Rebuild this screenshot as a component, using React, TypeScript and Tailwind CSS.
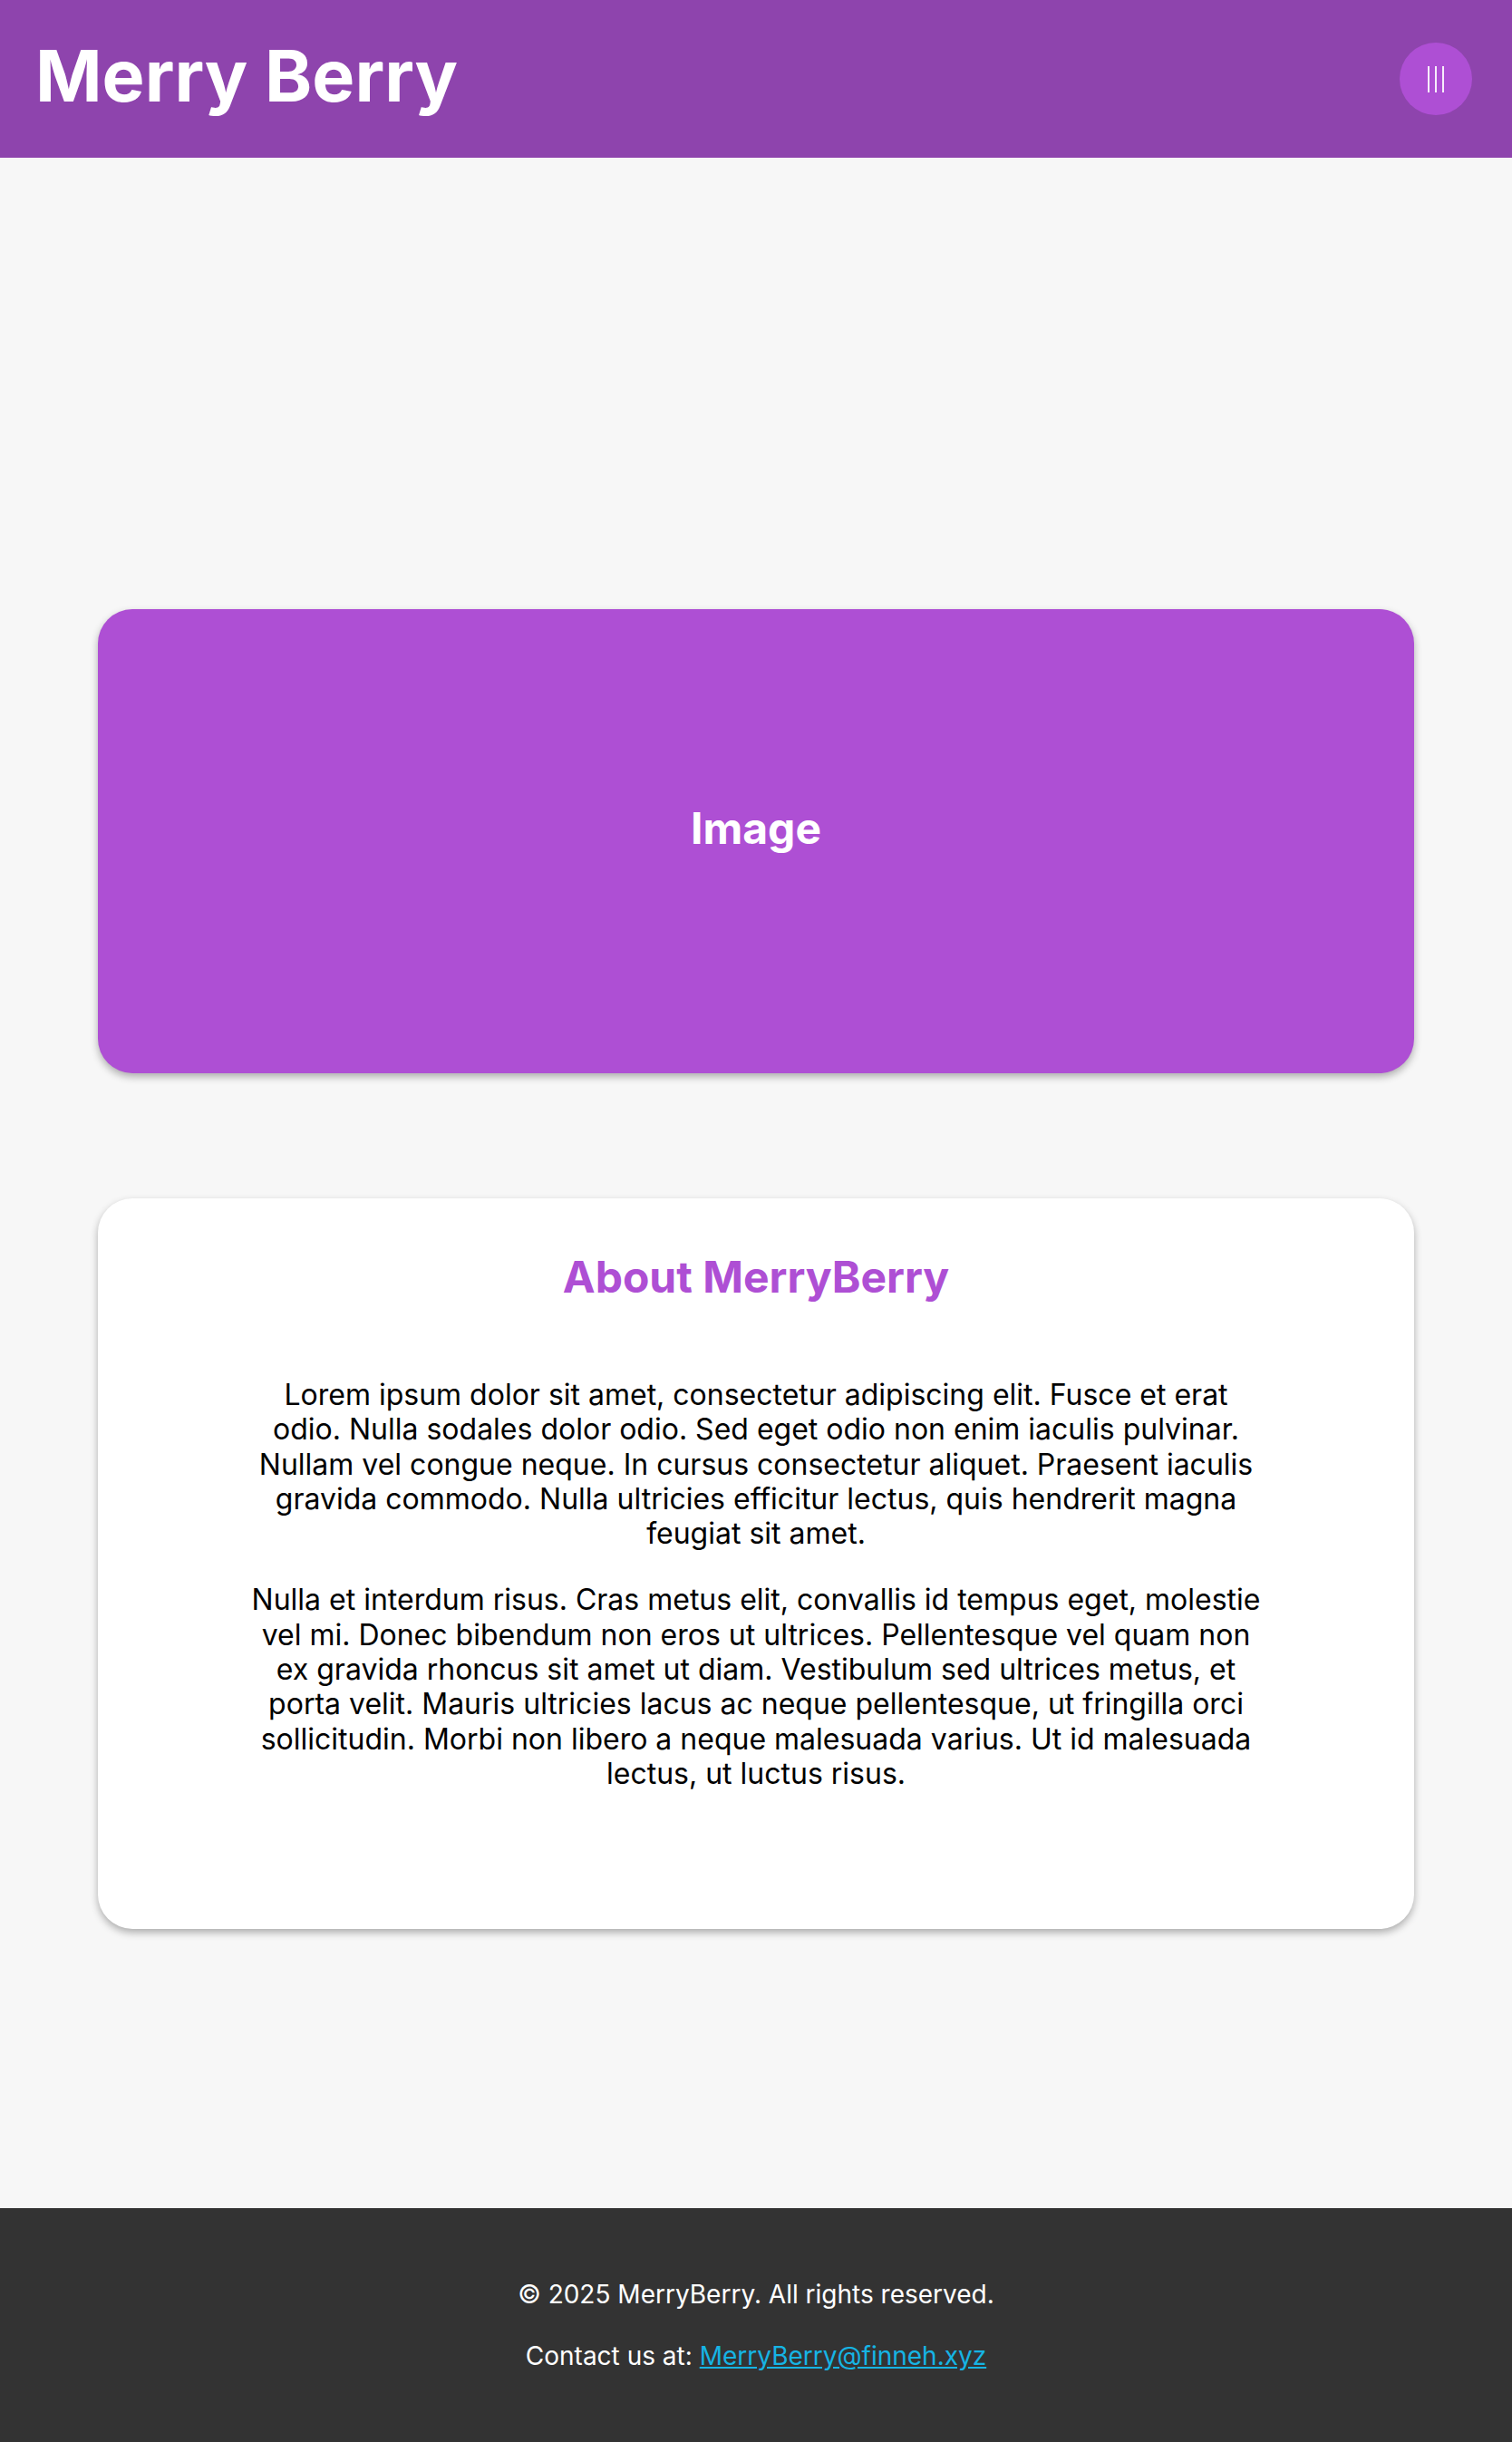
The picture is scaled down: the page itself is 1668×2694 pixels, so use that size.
import React from 'react';

export default function App() {
  return (
    <div className="min-h-screen flex flex-col bg-[#f7f7f7] font-['Inter','Noto_Sans',sans-serif]">
      {/* Header */}
      <header className="h-[174px] flex items-center justify-between bg-[#8e44ad] pl-[39px] pr-[44px]">
        <h1 className="text-[79px] font-bold text-white leading-[96px] -mt-[8px]">Merry Berry</h1>
        <button className="w-[80px] h-[80px] rounded-full bg-[#ae4fd4] flex items-center justify-center gap-[6px]">
          <span className="block w-[2px] h-[29px] bg-white/90"></span>
          <span className="block w-[2px] h-[29px] bg-white/90"></span>
          <span className="block w-[2px] h-[29px] bg-white/90"></span>
        </button>
      </header>

      <main className="flex-1 flex flex-col px-[108px] pt-[498px] pb-[308px] gap-[138px]">
        {/* Image placeholder */}
        <div className="h-[512px] rounded-[38px] bg-[#ae4fd4] shadow-[0_4px_8px_rgba(0,0,0,0.3)] flex items-center justify-center pb-[28px]">
          <span className="text-[48px] font-bold text-white">Image</span>
        </div>

        {/* About */}
        <section className="h-[806px] rounded-[38px] bg-white shadow-[0_4px_8px_rgba(0,0,0,0.3)] flex flex-col items-center pt-[58px]">
          <h2 className="text-[48px] font-bold text-[#ae4fd4] leading-[58px]">About MerryBerry</h2>
          <div className="mt-[82px] w-[1120px] flex flex-col gap-[35px] text-center text-[32px] leading-[38.3px] text-black">
            <p>
              Lorem ipsum dolor sit amet, consectetur adipiscing elit. Fusce et erat odio. Nulla sodales dolor odio. Sed eget odio non enim iaculis pulvinar. Nullam vel congue neque. In cursus consectetur aliquet. Praesent iaculis gravida commodo. Nulla ultricies efficitur lectus, quis hendrerit magna feugiat sit amet.
            </p>
            <p>
              Nulla et interdum risus. Cras metus elit, convallis id tempus eget, molestie vel mi. Donec bibendum non eros ut ultrices. Pellentesque vel quam non ex gravida rhoncus sit amet ut diam. Vestibulum sed ultrices metus, et porta velit. Mauris ultricies lacus ac neque pellentesque, ut fringilla orci sollicitudin. Morbi non libero a neque malesuada varius. Ut id malesuada lectus, ut luctus risus.
            </p>
          </div>
        </section>
      </main>

      {/* Footer */}
      <footer className="h-[258px] bg-[#333333] flex flex-col items-center justify-center gap-[34px] text-white text-[28px] leading-[34px]">
        <p>© 2025 MerryBerry. All rights reserved.</p>
        <p>
          Contact us at:{' '}
          <a href="mailto:MerryBerry@finneh.xyz" className="text-[#16b4e4] underline">
            MerryBerry@finneh.xyz
          </a>
        </p>
      </footer>
    </div>
  );
}
